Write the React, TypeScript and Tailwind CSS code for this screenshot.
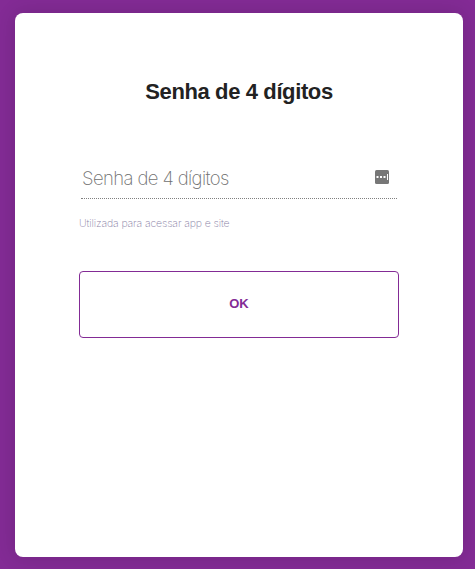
export default function App() {
  return (
    <main className="h-[569px] w-[475px] overflow-hidden bg-[#832b95] pt-[13px] pl-[15px] font-['Liberation_Sans',sans-serif]">
      <section className="flex h-[544px] w-[448px] flex-col rounded-lg bg-white px-16 pt-[63px] shadow-[0_0_20px_rgba(0,0,0,0.14)]">
        <h1 className="text-center text-[22px] leading-8 font-bold tracking-[-0.38px] whitespace-nowrap text-[#222]">
          Senha de 4 dígitos
        </h1>
        <div className="mx-0.5 mt-[50px] flex h-[41px] items-start justify-between border-b border-dotted border-[#808080] pt-[9px] pr-2 pl-px">
          <span className="font-['Inter',sans-serif] text-[18.5px] leading-[23px] font-extralight tracking-[-0.6px] whitespace-nowrap text-[#707070]">
            Senha de 4 dígitos
          </span>
          <svg className="mt-[3px] h-3.5 w-3.5" viewBox="0 0 14 14">
            <rect width="14" height="14" rx="1.5" fill="#777" />
            <path d="M1.5 6h2v2h-2zM5 6h2v2H5zM8.5 6h2v2h-2zM12 4h1v6h-1z" fill="#fff" />
          </svg>
        </div>
        <p className="mt-4 pt-px font-['Inter',sans-serif] text-[10.5px] leading-4 font-extralight tracking-[-0.12px] whitespace-nowrap text-[#8c84a8]">
          Utilizada para acessar app e site
        </p>
        <button className="mt-[39px] h-[67px] w-full rounded border border-[#832b95] pb-0.5 text-[13px] font-bold text-[#832b95]">
          OK
        </button>
      </section>
    </main>
  );
}
